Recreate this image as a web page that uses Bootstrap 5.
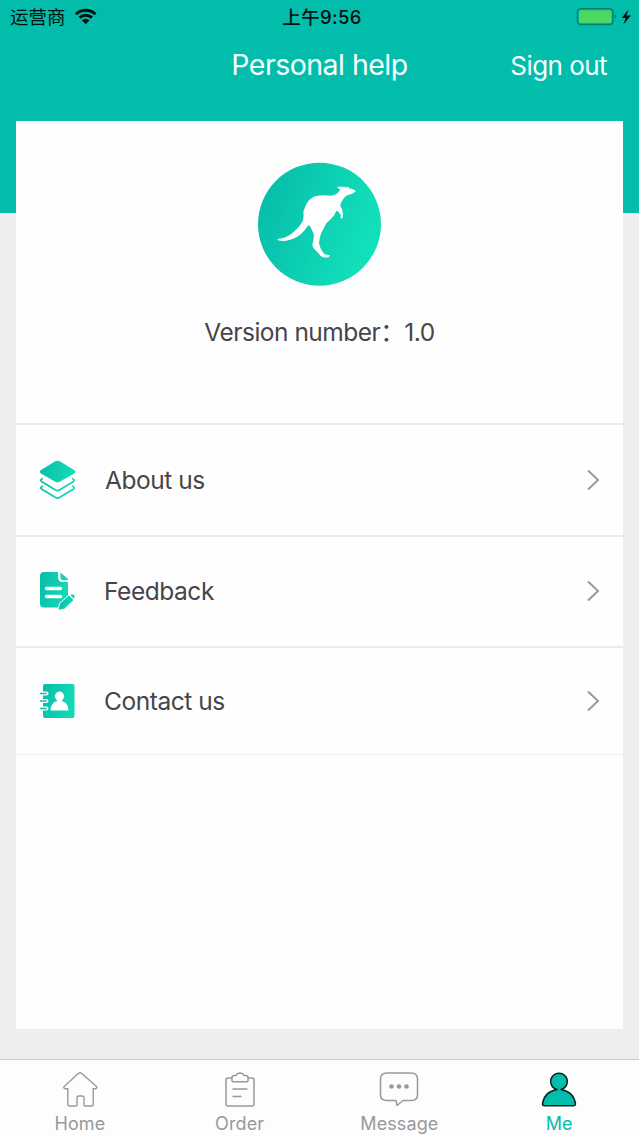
<!DOCTYPE html>
<html lang="en">
<head>
<meta charset="utf-8">
<meta name="viewport" content="width=device-width, initial-scale=1">
<title>Personal help</title>
<link href="https://cdn.jsdelivr.net/npm/bootstrap@5.3.0/dist/css/bootstrap.min.css" rel="stylesheet">
<style>
:root{--teal:#03bdac;--ink:#464549;--muted:#99989d}
body{font-family:Inter,"Noto Sans CJK SC",sans-serif;color:var(--ink);height:1136px;overflow:hidden;background:linear-gradient(var(--teal) 213px,#efedf0 213px)}
svg{display:block;flex:none}
.status-row{height:32px;color:#00120f;padding:0 7px 0 10px}
.carrier{font-size:18.5px;line-height:32px;width:64px;white-space:nowrap;padding-top:1px}
.clock{font-size:18.5px;line-height:32px;font-weight:500;letter-spacing:.35px;padding:1px 0 0 2px}
.title-row{height:89px;color:#f4fffd;padding:15px 32px 0}
.page-title{font-size:28.5px;line-height:35px;letter-spacing:-.52px}
.sign{font-size:26px;line-height:37px;letter-spacing:-.55px}
.panel{height:908px;margin:0 16px;background:#fefefe}
.hero{height:302px;padding-top:41px}
.version{font-size:24.5px;line-height:30px;margin-top:31px;letter-spacing:-.5px}
.menu-row{height:111.5px;border-top:2px solid #ebeaed;padding:0 22px 0 23px}
.menu-row.last{height:109px;border-bottom:1px solid #efeef1;padding-bottom:1px}
.menu-label{font-size:24.5px;line-height:32px;margin-left:29px;letter-spacing:-.45px}
.tabs{height:77px;margin-top:30px;background:#fdfdfe;border-top:1px solid #c9c8cc;color:var(--muted);font-size:18px;line-height:22px}
.tabs .tab{padding-top:10px}
.tab span{margin-top:5px;letter-spacing:.1px}
.tab.current{color:var(--teal)}
</style>
</head>
<body>
<svg width="0" height="0" class="position-absolute" aria-hidden="true"><defs>
<linearGradient id="fresh" x1="0" y1="0" x2="1" y2=".25"><stop stop-color="#08bca9"/><stop offset="1" stop-color="#12dab7"/></linearGradient>
<linearGradient id="disc" x1="0" y1="0" x2="1" y2=".35"><stop offset=".15" stop-color="#07bfaa"/><stop offset="1" stop-color="#12e0ba"/></linearGradient>
</defs></svg>
<header>
<div class="status-row row g-0 align-items-center">
<div class="col d-flex align-items-center"><span class="carrier">运营商</span><svg width="24" height="32" viewBox="0 0 24 32" fill="none" stroke="#00120f"><path d="M2 13.100a14 14 0 0 1 19.400 0M5.500 16.700a9 9 0 0 1 12.400 0" stroke-width="3"/><path d="M7.900 19.200a5.500 5.500 0 0 1 7.600 0L11.700 23.200z" fill="#00120f" stroke="none"/></svg></div>
<div class="col-auto clock">上午9:56</div>
<div class="col d-flex justify-content-end"><svg width="56" height="32" viewBox="0 0 56 32"><rect x="1.500" y="7.700" width="35.500" height="15.800" rx="3.500" fill="none" stroke="#087d76" stroke-width="1.500"/><rect x="3" y="9.200" width="32.500" height="12.800" rx="2" fill="#4cd763"/><path d="M39 13q2.400 2.600 0 5.200z" fill="#087d76"/><path d="M52.500 8.500 45.700 17h4l-2.400 6.500L55 14.600h-4.500z" fill="#00120f"/></svg></div>
</div>
<div class="title-row row g-0"><div class="col"></div><h1 class="col-auto page-title fw-normal mb-0">Personal help</h1><div class="col text-end"><span class="sign">Sign out</span></div></div>
</header>
<main class="panel">
<section class="hero d-flex flex-column align-items-center">
<svg width="123" height="124" viewBox="24 20 369 372"><circle cx="208.500" cy="206.500" r="184.500" fill="url(#disc)"/><path fill="#fff" d="M262 95Q271 92 278 96L282 93 286 97 293 94 297 98Q309 101 318 107 313 114 297 118 287 119 280 131 270 143 271 152 279 164 279 177 280 186 276 190L271 187Q274 181 271 177L264 168 259 167Q254 180 243 190L228 205Q223 217 214 232 207 250 207 264 210 280 220 293 225 300 238 299 240 303 235 306 221 308 212 302 205 293 191 279 186 272 188 263 193 249 191 235 185 222 178 209 171 212 165 223 153 239 139 246 119 256 104 257 91 258 82 254 84 250 96 249 118 244 137 224 151 212 158 198 162 187 160 169 165 149 177 135 188 123 203 121 224 118 244 121 256 119 264 112 270 108 270 102 264 101 262 95z"/></svg>
<div class="version">Version number：1.0</div>
</section>
<nav>
<div class="menu-row d-flex align-items-center"><svg width="37" height="40" viewBox="0 0 37 40"><path fill="none" stroke="url(#fresh)" stroke-width="1.700" stroke-linejoin="round" d="M4 26Q.5 27.500 2.500 29L16.500 37.500q2 1.100 4 0l14-8.500q2-1.500-1.500-3M4 18.500Q.5 20 2.500 21.500L16.500 30q2 1.100 4 0l14-8.500q2-1.500-1.500-3"/><path fill="url(#fresh)" d="M16.300 1.300q2.200-1.300 4.400 0l14 8.500q3 2 0 4l-14 8q-2.200 1.300-4.400 0l-14-8q-3-2 0-4z"/></svg><span class="menu-label">About us</span><svg class="ms-auto" width="16" height="24" viewBox="0 0 16 24"><path d="m3 2.500 10 9.500-10 9.500" fill="none" stroke="#99989d" stroke-width="2"/></svg></div>
<div class="menu-row d-flex align-items-center"><svg width="36" height="38" viewBox="0 0 36 38"><path fill="url(#fresh)" d="M5 0h14v5q0 5 5 5h5v14L19 35.500H5q-4 0-4-4V4q0-4 4-4zM21.500.5l7.500 6.500q1 1 0 1h-5q-2.500 0-2.500-2.500z"/><path d="M7.500 16.500h14M7.500 24.500h14" stroke="#fefefe" stroke-width="3.400" stroke-linecap="round"/><path fill="url(#fresh)" stroke="#fefefe" stroke-width="1" d="m19 38.500 1.500-7L30 23l5 5-9.500 9z"/><path d="m30.500 22 5.500 5.500" stroke="#fefefe" stroke-width="1"/><path fill="#12d4b4" d="m31.500 23.200 1.500-1q3 0 2.500 3.500l-1 1z"/></svg><span class="menu-label">Feedback</span><svg class="ms-auto" width="16" height="24" viewBox="0 0 16 24"><path d="m3 2.500 10 9.500-10 9.500" fill="none" stroke="#99989d" stroke-width="2"/></svg></div>
<div class="menu-row last d-flex align-items-center"><svg width="36" height="36" viewBox="0 0 36 36"><rect x="4" y="1" width="31.500" height="34" rx="2" fill="url(#fresh)"/><path d="M1.500 10.500h6M1.500 18h6M1.500 25.500h6" stroke="#fefefe" stroke-width="4" stroke-linecap="round"/><path d="M1.500 10.500h5.500M1.500 18h5.500M1.500 25.500h5.500" stroke="#13bdac" stroke-width="1.600" stroke-linecap="round"/><circle cx="20.500" cy="13.200" r="4.600" fill="#fefefe"/><path d="M18.500 15h4l.5 3q6.500 2 6.500 9.500h-18q0-7.500 6.500-9.500z" fill="#fefefe"/></svg><span class="menu-label">Contact us</span><svg class="ms-auto" width="16" height="24" viewBox="0 0 16 24"><path d="m3 2.500 10 9.500-10 9.500" fill="none" stroke="#99989d" stroke-width="2"/></svg></div>
</nav>
</main>
<footer class="tabs row g-0">
<div class="col tab d-flex flex-column align-items-center"><svg width="38" height="38" viewBox="0 0 38 38" fill="none" stroke="#99989d" stroke-width="1.400" stroke-linejoin="round"><path d="M17.500 3.300q1.500-1 3 0l15 13.200q1.200 1.600-.8 2.200h-2.500V34q0 2-2 2H24q-1 0-1-1v-7q0-2-2-2h-3q-2 0-2 2v7q0 1-1 1H8.800q-2 0-2-2V18.700H4q-2-.6-.8-2.200z"/></svg><span>Home</span></div>
<div class="col tab d-flex flex-column align-items-center"><svg width="38" height="38" viewBox="0 0 38 38" fill="none" stroke="#99989d" stroke-width="1.500" stroke-linejoin="round"><path d="M11 8H7q-2 0-2 2v24q0 2 2 2h24q2 0 2-2V10q0-2-2-2h-4M13 5.500h2q1-2.500 4-2.500t4 2.500h2q2 0 2 2v3q0 1.200-1.200 1.200H12.200q-1.200 0-1.200-1.200v-3q0-2 2-2zM11.500 19h15M11.500 26.500h9"/></svg><span>Order</span></div>
<div class="col tab d-flex flex-column align-items-center"><svg width="40" height="38" viewBox="0 0 40 38" fill="none" stroke="#99989d" stroke-width="1.500" stroke-linejoin="round"><path d="M8 3h24q6.500 0 6.500 6v16q0 5.500-6.500 5.500h-8L18 35.500l-1-5H8q-6.500 0-6.500-5.500V9Q1.500 3 8 3z"/><g fill="#99989d" stroke="none"><circle cx="12.500" cy="16.500" r="2.300"/><circle cx="20" cy="16.500" r="2.300"/><circle cx="27.500" cy="16.500" r="2.300"/></g></svg><span>Message</span></div>
<div class="col tab current d-flex flex-column align-items-center"><svg width="38" height="38" viewBox="0 0 38 38" fill="#03bdac" stroke="#082320" stroke-width="1.500" stroke-linejoin="round"><path d="M17 19.500a8.300 8.300 0 1 1 4 0Q34 22 35.500 34q0 1.700-1.700 1.700H4.200q-1.700 0-1.700-1.700Q4 22 17 19.500z"/></svg><span>Me</span></div>
</footer>
<script src="https://cdn.jsdelivr.net/npm/bootstrap@5.3.0/dist/js/bootstrap.bundle.min.js"></script>
</body>
</html>
